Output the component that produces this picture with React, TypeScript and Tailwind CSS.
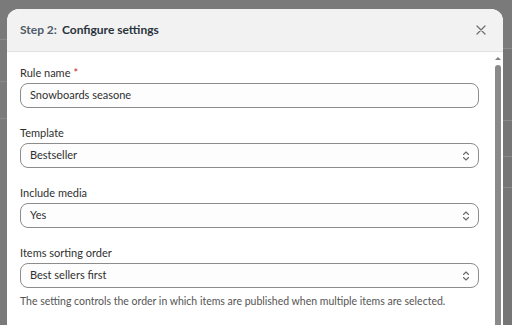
import React from 'react';

const ChevronUpDown = () => (
  <svg width="8" height="12" viewBox="0 0 8 12" fill="none" stroke="#6b6b6b" strokeWidth="1.1" strokeLinecap="round" strokeLinejoin="round">
    <path d="M1.5 4.5 L4 2 L6.5 4.5" />
    <path d="M1.5 7.5 L4 10 L6.5 7.5" />
  </svg>
);

const Field = ({ label, required, value, select }: { label: string; required?: boolean; value: string; select?: boolean }) => (
  <div>
    <div className="text-[11px] leading-[16px] text-[#303030] mb-[2px]">
      {label}
      {required && <span className="text-[#c02a2a] ml-[3px]">*</span>}
    </div>
    <div className="h-[25px] rounded-[8px] border border-[#8c8c8c] bg-[#fdfdfd] flex items-center pl-[9px] pr-[8px] text-[11px] text-[#303030]">
      <span className="flex-1">{value}</span>
      {select && <ChevronUpDown />}
    </div>
  </div>
);

const App = () => {
  return (
    <div className="relative w-[512px] h-[325px] overflow-hidden bg-[#7a7a7a] flex flex-col pt-[9px] pl-[7px] pr-[9px]" style={{ fontFamily: 'Lato, "Open Sans", sans-serif' }}>
      {/* dimmed page behind the modal */}
      <div className="absolute inset-0">
        <div className="absolute left-0 top-[39px] w-[7px] h-px bg-[#8a8a8a]" />
        <div className="absolute left-0 top-[81px] w-[7px] h-px bg-[#8a8a8a]" />
        <div className="absolute left-0 top-[118px] w-[7px] h-px bg-[#8a8a8a]" />
        <div className="absolute right-0 top-[48px] w-[9px] h-[277px] bg-[#767676]" />
        <div className="absolute right-0 top-[48px] w-[9px] h-px bg-[#8a8a8a]" />
        <div className="absolute right-0 top-[120px] w-[9px] h-px bg-[#8a8a8a]" />
        <div className="absolute right-0 top-[156px] w-[9px] h-px bg-[#8a8a8a]" />
        <div className="absolute right-0 top-[187px] w-[9px] h-px bg-[#8a8a8a]" />
      </div>

      {/* modal */}
      <div className="relative flex-1 flex flex-col bg-white rounded-t-[12px] overflow-hidden">
        <div className="h-[43px] shrink-0 bg-[#f2f2f2] border-b border-[#e1e1e1] flex items-center pl-[13px] pr-[17px]">
          <div className="flex-1 text-[12px] font-bold">
            <span className="text-[#4f5b68]">Step 2:</span>
            <span className="text-[#2a323c] ml-[5px]">Configure settings</span>
          </div>
          <svg width="10" height="10" viewBox="0 0 10 10" stroke="#6e6e6e" strokeWidth="1.2" strokeLinecap="round">
            <path d="M1 1 L9 9 M9 1 L1 9" />
          </svg>
        </div>

        <div className="flex-1 flex">
          <div className="flex-1 pl-[13px] pr-[16px] pt-[13px] flex flex-col gap-[17px]">
            <Field label="Rule name" required value="Snowboards seasone" />
            <Field label="Template" value="Bestseller" select />
            <Field label="Include media" value="Yes" select />
            <div>
              <Field label="Items sorting order" value="Best sellers first" select />
              <p className="mt-[5px] text-[10.5px] leading-[16px] text-[#555555]">
                The setting controls the order in which items are published when multiple items are selected.
              </p>
            </div>
          </div>

          {/* scrollbar */}
          <div className="w-[8px] shrink-0 flex flex-col items-start pt-[5px]">
            <div className="w-[6px] flex justify-center">
              <div className="w-0 h-0 border-l-[3px] border-r-[3px] border-b-[3px] border-l-transparent border-r-transparent border-b-[#7e7e7e]" />
            </div>
            <div className="mt-[5px] w-[6px] flex-1 rounded-t-full bg-[#8a8a8a]" />
          </div>
        </div>
      </div>
    </div>
  );
};

export default App;
